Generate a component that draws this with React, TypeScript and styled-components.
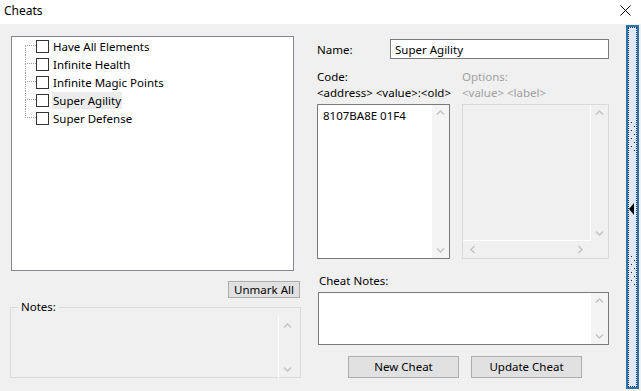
import styled, { createGlobalStyle } from "styled-components"

const GlobalStyle = createGlobalStyle`
  html, body {
    margin: 0;
    padding: 0;
    background: #f0f0f0;
  }
  body {
    font-family: "Noto Sans", "Open Sans", sans-serif;
    font-size: 11.5px;
    color: #000;
  }
`

type Dir = "up" | "down" | "left" | "right"

const arrowPoints: Record<Dir, string> = {
  up: "1,5.5 4.5,2 8,5.5",
  down: "1,2.5 4.5,6 8,2.5",
  left: "5.5,1 2,4.5 5.5,8",
  right: "2.5,1 6,4.5 2.5,8",
}

function ScrollArrow({ dir }: { dir: Dir }) {
  return (
    <svg width="9" height="9" viewBox="0 0 9 9">
      <polyline points={arrowPoints[dir]} fill="none" stroke="#c2c2c2" strokeWidth="1.4" />
    </svg>
  )
}

function GripDots() {
  return (
    <svg width="5" height="34" viewBox="0 0 5 34">
      {[0, 1, 2, 3, 4, 5, 6, 7].map(i => (
        <rect key={i} x={i % 2 === 0 ? 0 : 3} y={i * 4 + 1} width="1" height="1" fill="#1a2a4a" />
      ))}
    </svg>
  )
}

const cheats = [
  { name: "Have All Elements" },
  { name: "Infinite Health" },
  { name: "Infinite Magic Points" },
  { name: "Super Agility", selected: true },
  { name: "Super Defense" },
]

export default function App() {
  return (
    <>
      <GlobalStyle />
      <Window>
        <TitleBar>
          <span>Cheats</span>
          <svg width="11" height="11" viewBox="0 0 11 11">
            <path d="M0.5 0.5 L10.5 10.5 M10.5 0.5 L0.5 10.5" stroke="#000" strokeWidth="1" />
          </svg>
        </TitleBar>
        <Body>
          <Main>
            <LeftColumn>
              <TreeBox>
                {cheats.map((c, i) => (
                  <TreeRow key={c.name}>
                    <Connector>
                      <ConnTop $first={i === 0} />
                      <ConnBottom $last={i === cheats.length - 1} />
                    </Connector>
                    <CheckBox />
                    <ItemLabel $selected={!!c.selected}>{c.name}</ItemLabel>
                  </TreeRow>
                ))}
              </TreeBox>
              <UnmarkButton>Unmark All</UnmarkButton>
              <GroupBox>
                <legend>Notes:</legend>
                <GroupScroll>
                  <ScrollArrow dir="up" />
                  <ScrollArrow dir="down" />
                </GroupScroll>
              </GroupBox>
            </LeftColumn>

            <RightColumn>
              <NameRow>
                <NameLabel>Name:</NameLabel>
                <TextInput>Super Agility</TextInput>
              </NameRow>
              <CodeGrid>
                <Label>Code:</Label>
                <Label $disabled>Options:</Label>
                <Label>&lt;address&gt; &lt;value&gt;:&lt;old&gt;</Label>
                <Label $disabled>&lt;value&gt; &lt;label&gt;</Label>
                <EditBox $height={155}>
                  <EditText>8107BA8E 01F4</EditText>
                  <VScroll>
                    <ScrollArrow dir="up" />
                    <ScrollArrow dir="down" />
                  </VScroll>
                </EditBox>
                <OptionsBox>
                  <OptionsContent />
                  <VScroll $flat>
                    <ScrollArrow dir="up" />
                    <ScrollArrow dir="down" />
                  </VScroll>
                  <HScroll>
                    <ScrollArrow dir="left" />
                    <ScrollArrow dir="right" />
                  </HScroll>
                  <span />
                </OptionsBox>
              </CodeGrid>
              <NotesLabel>Cheat Notes:</NotesLabel>
              <NotesBox $height={53}>
                <EditText />
                <VScroll>
                  <ScrollArrow dir="up" />
                  <ScrollArrow dir="down" />
                </VScroll>
              </NotesBox>
              <ButtonRow>
                <Button $width={111} $height={22}>New Cheat</Button>
                <Button $width={111} $height={22}>Update Cheat</Button>
              </ButtonRow>
            </RightColumn>
          </Main>

          <Splitter>
            <SplitterInner>
              <Grip>
                <GripDots />
              </Grip>
              <Arrow />
              <Grip>
                <GripDots />
              </Grip>
            </SplitterInner>
          </Splitter>
        </Body>
      </Window>
    </>
  )
}

const Window = styled.div`
  width: 641px;
  height: 391px;
  display: flex;
  flex-direction: column;
  background: #f0f0f0;
  overflow: hidden;
`

const TitleBar = styled.header`
  height: 24px;
  flex: none;
  box-sizing: border-box;
  background: #fff;
  display: flex;
  align-items: center;
  justify-content: space-between;
  padding: 0 10px 4px 4px;
  font-size: 12px;
`

const Body = styled.div`
  flex: 1;
  display: flex;
  min-height: 0;
`

const Main = styled.div`
  width: 626px;
  flex: none;
  box-sizing: border-box;
  display: grid;
  grid-template-columns: 291px 292px;
  column-gap: 16px;
  align-items: start;
  padding: 12px 0 0 10px;
`

const LeftColumn = styled.div`
  display: flex;
  flex-direction: column;
`

const TreeBox = styled.div`
  margin-left: 1px;
  width: 283px;
  height: 235px;
  box-sizing: border-box;
  border: 1px solid #828790;
  background: #fff;
  padding-left: 13px;
`

const TreeRow = styled.div`
  height: 18px;
  display: flex;
  align-items: center;
  white-space: nowrap;
`

const Connector = styled.div`
  width: 11px;
  height: 18px;
  display: grid;
  grid-template-rows: 9px 9px;
`

const ConnTop = styled.span<{ $first: boolean }>`
  border-left: 1px dotted ${p => (p.$first ? "transparent" : "#a0a0a0")};
  border-bottom: 1px dotted #a0a0a0;
  box-sizing: border-box;
`

const ConnBottom = styled.span<{ $last: boolean }>`
  border-left: 1px dotted ${p => (p.$last ? "transparent" : "#a0a0a0")};
`

const CheckBox = styled.span`
  width: 13px;
  height: 13px;
  box-sizing: border-box;
  border: 1px solid #333;
  background: #fff;
  margin-right: 3px;
  flex: none;
`

const ItemLabel = styled.span<{ $selected: boolean }>`
  padding: 1px 1px;
  background: ${p => (p.$selected ? "#ececec" : "transparent")};
`

const Button = styled.button<{ $width: number; $height: number }>`
  width: ${p => p.$width}px;
  height: ${p => p.$height}px;
  box-sizing: border-box;
  padding: 0;
  border: 1px solid #adadad;
  background: #e1e1e1;
  font: inherit;
  color: #000;
  line-height: 1;
`

const UnmarkButton = styled(Button).attrs({ $width: 72, $height: 17 })`
  align-self: flex-end;
  margin: 10px 1px 0 0;
`

const GroupBox = styled.fieldset`
  margin: 1px 0 0;
  padding: 0;
  height: 79px;
  box-sizing: border-box;
  border: 1px solid #dcdcdc;
  display: flex;
  justify-content: flex-end;

  legend {
    margin-left: 7px;
    padding: 0 3px;
    line-height: 16px;
  }
`

const VScroll = styled.div<{ $flat?: boolean }>`
  width: 17px;
  flex: none;
  box-sizing: border-box;
  display: flex;
  flex-direction: column;
  align-items: center;
  justify-content: space-between;
  padding: 4px 0 3px;
  background: ${p => (p.$flat ? "transparent" : "#f4f4f4")};
`

const GroupScroll = styled(VScroll).attrs({ $flat: true })`
  height: 62px;
  margin: 1px 5px 0 0;
  padding: 6px 0 4px;
  border-left: 1px solid #fff;
`

const HScroll = styled.div`
  height: 17px;
  display: flex;
  align-items: center;
  justify-content: space-between;
  padding: 0 6px;
`

const RightColumn = styled.div`
  display: flex;
  flex-direction: column;
`

const NameRow = styled.div`
  display: flex;
  align-items: center;
  margin-top: 3px;
`

const NameLabel = styled.span`
  width: 73px;
`

const TextInput = styled.div`
  flex: 1;
  height: 20px;
  box-sizing: border-box;
  border: 1px solid #7a7a7a;
  background: #fff;
  padding-left: 4px;
  display: flex;
  align-items: center;
`

const CodeGrid = styled.div`
  display: grid;
  grid-template-columns: 133px 147px;
  column-gap: 12px;
  margin-top: 10px;
`

const Label = styled.span<{ $disabled?: boolean }>`
  line-height: 16px;
  color: ${p => (p.$disabled ? "#a0a0a0" : "#000")};
  white-space: nowrap;
  &:nth-child(n + 3) {
    margin-bottom: 3px;
  }
`

const EditBox = styled.div<{ $height: number }>`
  height: ${p => p.$height}px;
  box-sizing: border-box;
  border: 1px solid #7a7a7a;
  background: #fff;
  display: flex;
`

const EditText = styled.div`
  flex: 1;
  padding: 3px 5px;
  line-height: 16px;
`

const OptionsBox = styled.div`
  height: 155px;
  box-sizing: border-box;
  border: 1px solid #d9d9d9;
  background: #f0f0f0;
  display: grid;
  grid-template-columns: 1fr 17px;
  grid-template-rows: 1fr 17px;
`

const OptionsContent = styled.div`
  border-right: 1px solid #fff;
  border-bottom: 1px solid #fff;
`

const NotesLabel = styled.span`
  margin: 14px 0 3px 2px;
  line-height: 16px;
`

const NotesBox = styled(EditBox)`
  margin-left: 1px;
`

const ButtonRow = styled.div`
  display: flex;
  justify-content: center;
  gap: 12px;
  margin-top: 11px;
  padding-left: 4px;
`

const Splitter = styled.div`
  width: 13px;
  flex: none;
  box-sizing: border-box;
  margin: 1px 0 2px;
  border: 2px solid #2f73a8;
  background: #dfe9f4;
  display: flex;
`

const SplitterInner = styled.div`
  flex: 1;
  border: 1px dotted #12305a;
  display: flex;
  flex-direction: column;
  align-items: center;
  padding-top: 93px;
`

const Grip = styled.div`
  display: flex;
  padding-left: 2px;
`

const Arrow = styled.span`
  width: 0;
  height: 0;
  margin: 48px 0 40px -2px;
  border-top: 6px solid transparent;
  border-bottom: 6px solid transparent;
  border-right: 5px solid #000;
`
